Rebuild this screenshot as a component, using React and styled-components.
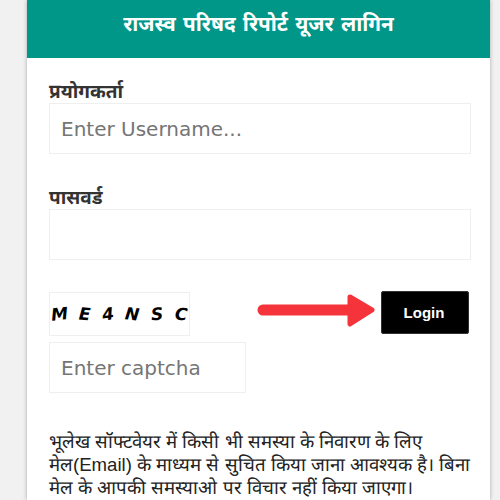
import React from 'react';
import styled, { createGlobalStyle } from 'styled-components';

const GlobalStyle = createGlobalStyle`
  html, body {
    margin: 0;
    height: 500px;
    overflow: hidden;
    background: #f1f1f1;
    font-family: "DejaVu Sans", "Noto Sans", sans-serif;
  }
  * { box-sizing: border-box; }
`;

const Card = styled.div`
  width: 463px;
  height: 500px;
  margin-left: 27px;
  background: #fff;
  box-shadow: 0 0 4px rgba(0, 0, 0, 0.3);
  overflow: hidden;
`;

const Header = styled.div`
  height: 58px;
  background: #009688;
  color: #fff;
  display: flex;
  align-items: center;
  justify-content: center;
  padding-bottom: 13px;
  font-size: 20.7px;
  font-weight: 700;
`;

const Form = styled.form`
  padding: 21px 19px 0 22px;
`;

const Label = styled.label`
  display: block;
  height: 24px;
  line-height: 24px;
  font-size: 19px;
  font-weight: 700;
  color: #333;
`;

const Input = styled.input`
  display: block;
  width: ${(props) => props.$width || '422px'};
  height: 51px;
  padding: 0 11px;
  margin-top: ${(props) => props.$top || '0'};
  margin-bottom: ${(props) => props.$gap || '31px'};
  border: 1px solid #efefef;
  outline: none;
  background: #fff;
  font-family: "DejaVu Sans", sans-serif;
  font-size: 20px;
  color: #333;
  &::placeholder {
    color: #757575;
    opacity: 1;
  }
`;

const CaptchaRow = styled.div`
  display: flex;
  align-items: flex-start;
  margin-top: 31px;
`;

const CaptchaBox = styled.div`
  width: 141px;
  height: 44px;
  margin-top: 1px;
  border: 1px solid #efefef;
  display: flex;
  align-items: center;
  justify-content: space-between;
  padding: 0 2px 0 1px;
`;

const CaptchaChar = styled.span`
  font-family: "DejaVu Sans", sans-serif;
  font-size: 17px;
  font-weight: 700;
  font-style: italic;
  color: #000;
  transform: rotate(${(props) => props.$tilt}deg);
`;

const Arrow = styled.svg`
  width: 118px;
  height: 42px;
  margin-left: 67px;
  flex: none;
`;

const LoginButton = styled.button`
  width: 88px;
  height: 43px;
  margin-left: 6px;
  padding: 0 2px 0 0;
  border: 1px solid #333;
  border-radius: 2px;
  background: #000;
  color: #fff;
  font-family: "Liberation Sans", sans-serif;
  font-size: 15px;
  font-weight: 700;
`;

const Notice = styled.p`
  margin: 0;
  width: 425px;
  font-family: "Liberation Sans", sans-serif;
  font-size: 18.6px;
  line-height: 23px;
  color: #222;
`;

const captcha = [
  ['M', -6],
  ['E', 4],
  ['4', -8],
  ['N', 6],
  ['S', -5],
  ['C', 5],
];

export default function App() {
  return (
    <>
      <GlobalStyle />
      <Card>
        <Header>राजस्व परिषद रिपोर्ट यूजर लागिन</Header>
        <Form>
          <Label>प्रयोगकर्ता</Label>
          <Input placeholder="Enter Username..." />
          <Label>पासवर्ड</Label>
          <Input type="password" $gap="0" />
          <CaptchaRow>
            <CaptchaBox>
              {captcha.map(([c, tilt]) => (
                <CaptchaChar key={c} $tilt={tilt}>{c}</CaptchaChar>
              ))}
            </CaptchaBox>
            <Arrow viewBox="0 0 118 42">
              <path d="M6 19H94" stroke="#f5333a" strokeWidth="11" strokeLinecap="round" />
              <path d="M93 6L115 19L93 33Z" fill="#f5333a" stroke="#f5333a" strokeWidth="5" strokeLinejoin="round" />
            </Arrow>
            <LoginButton type="button">Login</LoginButton>
          </CaptchaRow>
          <Input placeholder="Enter captcha" $width="197px" $top="6px" $gap="37px" />
          <Notice>
            भूलेख सॉफ्टवेयर में किसी भी समस्या के निवारण के लिए मेल(Email) के माध्यम से सुचित किया जाना आवश्यक है। बिना मेल के आपकी समस्याओ पर विचार नहीं किया जाएगा।
          </Notice>
        </Form>
      </Card>
    </>
  );
}
